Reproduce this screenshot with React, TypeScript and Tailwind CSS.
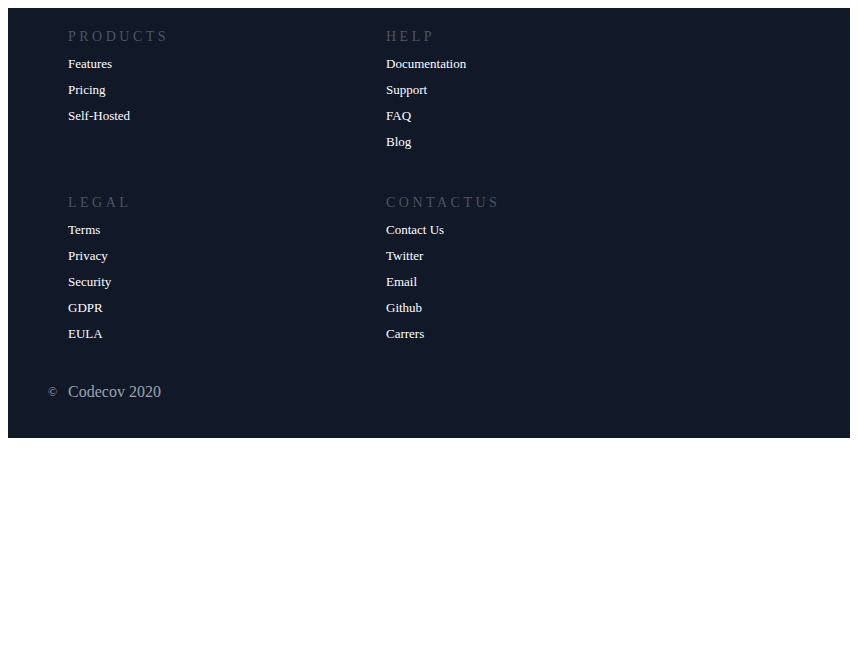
import React from "react";

const sections: { title: string; links: string[] }[][] = [
  [
    { title: "Products", links: ["Features", "Pricing", "Self-Hosted"] },
    { title: "Help", links: ["Documentation", "Support", "FAQ", "Blog"] },
  ],
  [
    { title: "Legal", links: ["Terms", "Privacy", "Security", "GDPR", "EULA"] },
    { title: "ContactUs", links: ["Contact Us", "Twitter", "Email", "Github", "Carrers"] },
  ],
];

export default function App() {
  return (
    <div className="p-2 bg-white min-h-[654px]" style={{ fontFamily: '"Liberation Serif", "Times New Roman", serif' }}>
      <footer className="bg-[#111827] px-10 pt-[19px] pb-[34px]">
        <div className="pl-5 flex flex-col gap-[38px]">
          {sections.map((row, i) => (
            <div key={i} className="flex">
              {row.map((s) => (
                <div key={s.title} className="w-[318px]">
                  <h3 className="text-[14px] leading-5 uppercase tracking-[0.25em] text-[#4b5563]">{s.title}</h3>
                  <ul className="mt-[4px]">
                    {s.links.map((l) => (
                      <li key={l} className="text-[13px] leading-[26px] text-white">
                        <a href="#">{l}</a>
                      </li>
                    ))}
                  </ul>
                </div>
              ))}
            </div>
          ))}
        </div>
        <div className="mt-[33px] flex items-center h-6 text-[#9ca3af]">
          <span className="text-[12px] w-5">©</span>
          <span className="text-[16px] leading-6">Codecov 2020</span>
        </div>
      </footer>
    </div>
  );
}
